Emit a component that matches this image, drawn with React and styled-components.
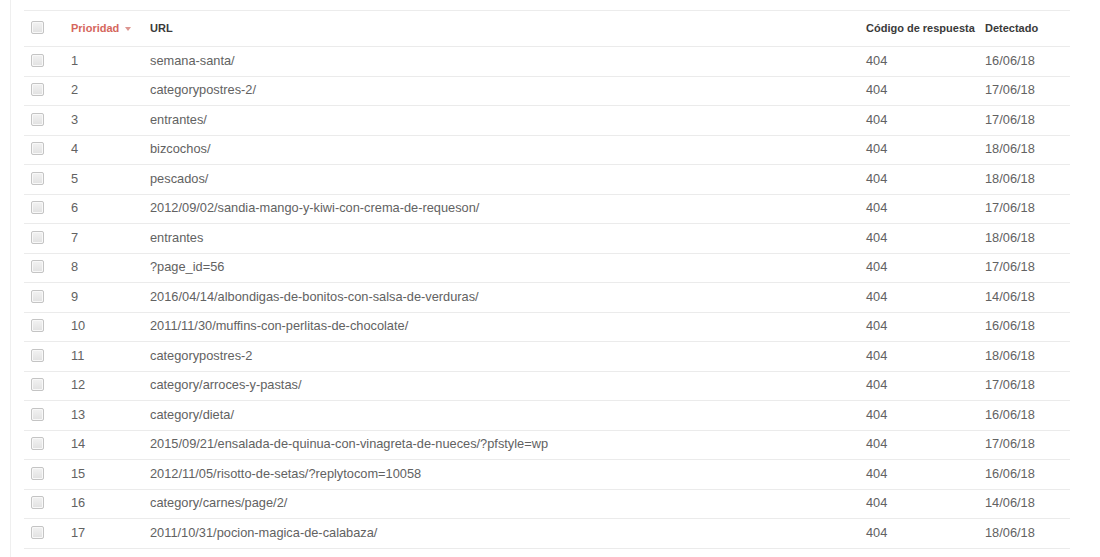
import React from "react";
import styled, { createGlobalStyle } from "styled-components";

const Global = createGlobalStyle`
  html, body { margin: 0; padding: 0; background: #fff; }
  body { font-family: Arial, "Liberation Sans", sans-serif; }
`;

const Page = styled.div`
  margin-left: 10px;
  border-left: 1px solid #efefef;
  padding: 10px 0 0 13px;
  height: 547px;
  width: 1046px;
`;

const Table = styled.div`
  border-top: 1px solid #ececec;
`;

const cols = "39px 79px 716px 119px 93px";

const Row = styled.div`
  display: grid;
  grid-template-columns: ${cols};
  align-items: center;
  box-sizing: border-box;
  height: ${(p) => (p.$head ? "36px" : "29.53px")};
  border-bottom: 1px solid #ebebeb;
`;

const Cell = styled.div`
  padding-left: ${(p) => (p.$check ? "7px" : "8px")};
  font-size: 12.8px;
  line-height: 15px;
  color: #626262;
  white-space: nowrap;
  display: flex;
  align-items: center;
  margin-top: -2px;
`;

const HeadCell = styled(Cell)`
  font-size: 11px;
  font-weight: bold;
  margin-top: 0;
  color: ${(p) => (p.$active ? "#d1564b" : "#3a3a3a")};
  opacity: ${(p) => (p.$active ? 0.9 : 1)};
`;

const Arrow = styled.span`
  display: inline-block;
  margin-left: 6px;
  width: 0;
  height: 0;
  border-left: 3.5px solid transparent;
  border-right: 3.5px solid transparent;
  border-top: 4px solid #d98a84;
`;

const Box = styled.span`
  display: inline-block;
  box-sizing: border-box;
  width: 13px;
  height: 13px;
  border: 1px solid #c4c4c4;
  border-radius: 2px;
  background: linear-gradient(#f2f2f2, #e1e1e1);
  box-shadow: inset 0 0 0 1px #f8f8f8;
`;

const rows = [
  ["semana-santa/", "16/06/18"],
  ["categorypostres-2/", "17/06/18"],
  ["entrantes/", "17/06/18"],
  ["bizcochos/", "18/06/18"],
  ["pescados/", "18/06/18"],
  ["2012/09/02/sandia-mango-y-kiwi-con-crema-de-requeson/", "17/06/18"],
  ["entrantes", "18/06/18"],
  ["?page_id=56", "17/06/18"],
  ["2016/04/14/albondigas-de-bonitos-con-salsa-de-verduras/", "14/06/18"],
  ["2011/11/30/muffins-con-perlitas-de-chocolate/", "16/06/18"],
  ["categorypostres-2", "18/06/18"],
  ["category/arroces-y-pastas/", "17/06/18"],
  ["category/dieta/", "16/06/18"],
  ["2015/09/21/ensalada-de-quinua-con-vinagreta-de-nueces/?pfstyle=wp", "17/06/18"],
  ["2012/11/05/risotto-de-setas/?replytocom=10058", "16/06/18"],
  ["category/carnes/page/2/", "14/06/18"],
  ["2011/10/31/pocion-magica-de-calabaza/", "18/06/18"],
];

export default function App() {
  return (
    <>
      <Global />
      <Page>
        <Table>
          <Row $head>
            <Cell $check><Box /></Cell>
            <HeadCell $active>Prioridad<Arrow /></HeadCell>
            <HeadCell>URL</HeadCell>
            <HeadCell>Código de respuesta</HeadCell>
            <HeadCell>Detectado</HeadCell>
          </Row>
          {rows.map(([url, date], i) => (
            <Row key={i}>
              <Cell $check><Box /></Cell>
              <Cell>{i + 1}</Cell>
              <Cell>{url}</Cell>
              <Cell>404</Cell>
              <Cell>{date}</Cell>
            </Row>
          ))}
        </Table>
      </Page>
    </>
  );
}
